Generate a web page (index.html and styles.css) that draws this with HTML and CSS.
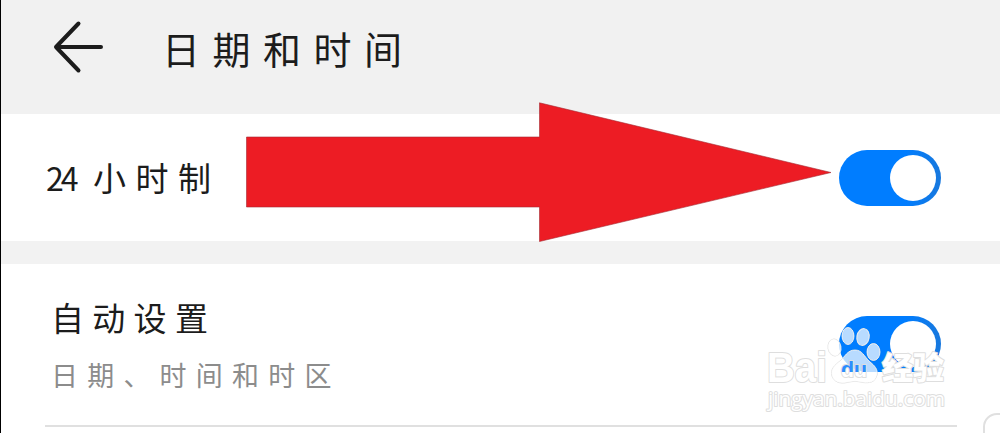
FILE: index.html
```html
<!DOCTYPE html>
<html lang="zh-CN">
<head>
  <meta charset="UTF-8">
  <title>日期和时间</title>
  <meta name="viewport" content="width=device-width, initial-scale=1">
  <link rel="stylesheet" href="styles.css">
</head>
<body>
  <div class="page">
    <header class="header">
      <svg class="back" width="52" height="54" viewBox="0 0 52 54">
        <path d="M27.500 3.500 L5 27 L27.500 50.500 M5 27 H50"/>
      </svg>
      <h1 class="title">日期和时间</h1>
    </header>

    <section class="row row-format">
      <div class="label label-format"><span class="num">24</span><span>小时制</span></div>
      <div class="switch"><div class="knob"></div></div>
    </section>

    <section class="row row-auto">
      <div class="texts">
        <div class="label label-auto">自动设置</div>
        <div class="hint">日期、时间和时区</div>
      </div>
      <div class="switch"><div class="knob"></div></div>
    </section>
    <div class="divider"></div>

    <svg class="pointer" width="586" height="141" viewBox="0 0 586 141">
      <path d="M.5 35 H293.500 V.8 L585 70.500 L293.500 139.500 V105 H.5 Z"/>
    </svg>

    <svg class="watermark" width="250" height="133" viewBox="0 0 250 133">
      <defs>
        <linearGradient id="duFill" gradientUnits="userSpaceOnUse" x1="0" y1="71.500" x2="0" y2="72">
          <stop offset="0" stop-color="#2a8dff"/>
          <stop offset="1" stop-color="#fff"/>
        </linearGradient>
      </defs>
      <g class="paw">
        <ellipse cx="84.500" cy="47.500" rx="6.500" ry="8.500" transform="rotate(-10 84.500 47.500)"/>
        <ellipse cx="98" cy="36" rx="6" ry="8.500"/>
        <ellipse cx="113" cy="37" rx="6.200" ry="8.500" transform="rotate(10 113 37)"/>
        <ellipse cx="123.500" cy="52" rx="6.500" ry="8.500"/>
        <path d="M105 50 C112 50 114 56 119 61 C125 66 128 69 127 75 C125 83 119 83 113 82.500 C107 81 103 81 97 82.500 C90 84 84 82 82 76 C80 69 85 65 90 61 C95 57 97 50 105 50 Z"/>
      </g>
      <text class="brand" x="17" y="82" textLength="60" lengthAdjust="spacingAndGlyphs">Bai</text>
      <text class="du" x="91" y="76.500" textLength="26" lengthAdjust="spacingAndGlyphs">du</text>
      <text class="brand-cn" x="132" y="79" textLength="62" lengthAdjust="spacingAndGlyphs">经验</text>
      <text class="url" x="18" y="106" textLength="177" lengthAdjust="spacingAndGlyphs">jingyan.baidu.com</text>
    </svg>

    <div class="corner"></div>
  </div>
</body>
</html>
```
FILE: styles.css
```css
* {
  box-sizing: border-box;
}
body {
  margin: 0;
  background: #fff;
  font-family: "Noto Sans CJK SC", sans-serif;
  color: #1c1c1c;
}
.page {
  position: relative;
  width: 1000px;
  height: 433px;
  overflow: hidden;
  border-left: 1px solid #000;
}
.header {
  display: flex;
  align-items: center;
  height: 114px;
  padding: 0 0 20px 50px;
  background: #f1f1f1;
}
.back {
  fill: none;
  stroke: #1c1c1c;
  stroke-width: 4;
  stroke-linecap: round;
  stroke-linejoin: round;
}
.title {
  margin: 2px 0 0 59px;
  font-size: 38px;
  font-weight: 400;
  line-height: 50px;
  letter-spacing: 12.5px;
}
.row {
  display: flex;
  justify-content: space-between;
  padding-right: 59px;
}
.row-format {
  height: 127px;
  padding-top: 36px;
  padding-left: 45px;
}
.label {
  font-size: 33px;
  line-height: 44px;
}
.label-format {
  display: flex;
  gap: 15px;
  padding-top: 5px;
  letter-spacing: 9.5px;
}
.num {
  width: 32px;
  font-size: 32px;
  letter-spacing: -3px;
}
.row-auto {
  height: 184px;
  padding-top: 52px;
  padding-left: 50px;
  border-top: 23px solid #f2f2f2;
}
.texts {
  margin-top: -21px;
}
.label-auto {
  letter-spacing: 8.3px;
}
.hint {
  margin-top: 18px;
  font-size: 27px;
  line-height: 36px;
  letter-spacing: 9.2px;
  color: #8c8c8c;
}
.switch {
  width: 102px;
  height: 56px;
  padding: 5px;
  border-radius: 28px;
  background: linear-gradient(90deg, #007dff 65%, #1878dd);
}
.knob {
  width: 46px;
  height: 46px;
  margin-left: auto;
  border-radius: 50%;
  background: #fff;
}
.divider {
  width: 912px;
  height: 2px;
  margin-left: 44px;
  background: #e0e0e0;
}
.pointer {
  position: absolute;
  top: 102px;
  left: 245px;
  fill: #ed1c24;
  stroke: #a52a32;
  stroke-width: 0.6;
}
.watermark {
  position: absolute;
  top: 300px;
  left: 749px;
  fill: #fff;
  stroke: #dedede;
  stroke-width: 2;
  stroke-linejoin: round;
  paint-order: stroke;
}
.paw {
  fill: rgba(255, 255, 255, 0.72);
  stroke-width: 1;
}
.brand {
  font: bold 42px "Liberation Sans", sans-serif;
}
.du {
  fill: url(#duFill);
  font: bold 22px "Liberation Sans", sans-serif;
}
.brand-cn {
  font: 900 31px "Noto Sans CJK SC", sans-serif;
}
.url {
  font: 20px "Open Sans", sans-serif;
}
.corner {
  position: absolute;
  left: 982px;
  top: 413px;
  width: 40px;
  height: 40px;
  border: 2px solid #e0e0e0;
  border-radius: 14px;
}
```
